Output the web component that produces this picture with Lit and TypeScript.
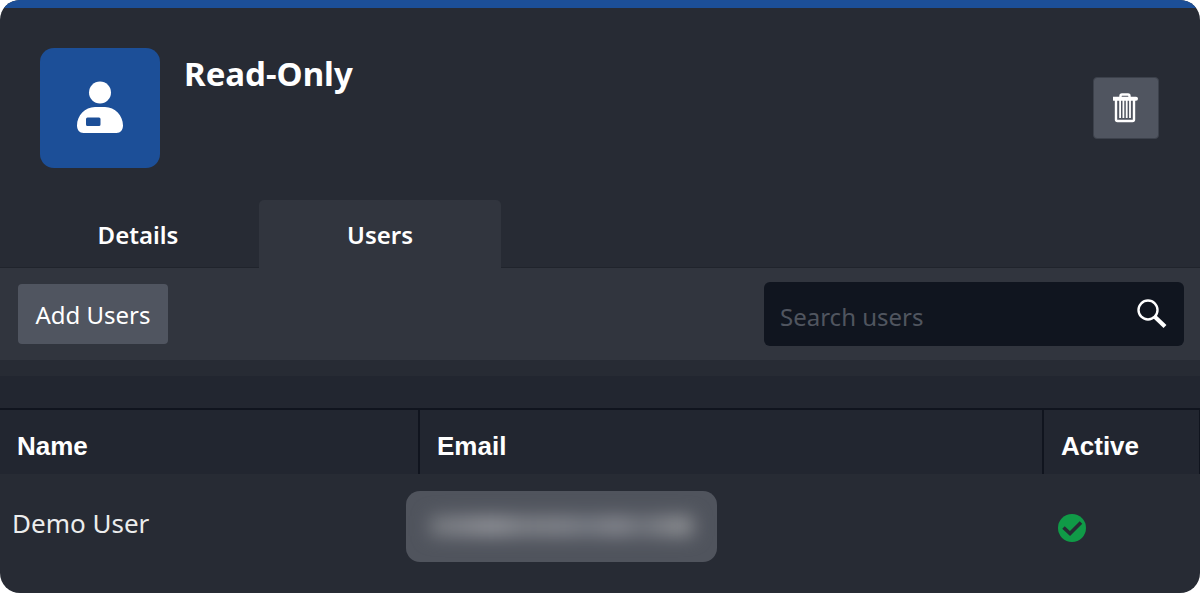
import { LitElement, html, css } from "lit";
import { customElement, state } from "lit/decorators.js";

interface User {
  name: string;
  active: boolean;
}

@customElement("app-root")
export class AppRoot extends LitElement {
  @state() private tab = "Users";
  @state() private users: User[] = [{ name: "Demo User", active: true }];

  static styles = css`
    :host {
      display: block;
      font-family: "Noto Sans", "Open Sans", sans-serif;
      font-size: 24px;
      color: #fff;
      background: #fff;
    }
    * {
      box-sizing: border-box;
    }
    button,
    input {
      font: inherit;
      color: inherit;
      border: 0;
      margin: 0;
    }
    .panel {
      min-height: 100vh;
      border-radius: 20px;
      overflow: hidden;
      background: #272b34;
      display: flex;
      flex-direction: column;
    }
    .accent {
      height: 8px;
      background: #1c4f98;
    }
    header {
      display: flex;
      gap: 24px;
      padding: 40px 41px 32px 40px;
    }
    .avatar {
      display: flex;
      width: 120px;
      height: 120px;
      border-radius: 14px;
      background: #1c4f98;
    }
    h1 {
      flex: 1;
      margin: 0;
      padding-top: 4px;
      font-size: 33px;
      line-height: 44px;
      font-weight: 700;
    }
    .delete {
      align-self: center;
      display: flex;
      align-items: center;
      justify-content: center;
      width: 66px;
      height: 62px;
      padding: 0;
      border: 1px solid #3c414b;
      border-radius: 4px;
      background: #505560;
    }
    .tabs {
      display: flex;
      padding-left: 17px;
      box-shadow: inset 0 -1px #20242c;
    }
    .tab {
      width: 242px;
      height: 68px;
      padding: 0;
      border-radius: 5px 5px 0 0;
      background: transparent;
      font-weight: 600;
    }
    .tab.selected {
      background: #31353e;
    }
    .toolbar {
      display: flex;
      align-items: center;
      justify-content: space-between;
      padding: 14px 16px 14px 18px;
      background: #31353e;
    }
    .add {
      min-width: 150px;
      height: 60px;
      padding: 0 16px;
      border-radius: 4px;
      background: #505560;
    }
    .search {
      display: flex;
      align-items: center;
      flex: 0 1 420px;
      height: 64px;
      padding: 0 16px;
      border-radius: 6px;
      background: #10151f;
    }
    .search input {
      flex: 1;
      min-width: 0;
      padding: 4px 0 0;
      background: transparent;
      outline: none;
    }
    .search input::placeholder {
      color: #50555f;
      opacity: 1;
    }
    .strip {
      height: 32px;
      margin-top: 16px;
      background: #222630;
    }
    table {
      width: 100%;
      table-layout: fixed;
      border-collapse: separate;
      border-spacing: 0;
      border-top: 2px solid #10141e;
    }
    .name {
      width: 35%;
    }
    .email {
      width: 52%;
    }
    th {
      height: 64px;
      padding: 8px 16px 0 17px;
      text-align: left;
      font-family: "Liberation Sans", Arial, sans-serif;
      font-size: 26px;
      font-weight: 700;
      background: #222630;
      border-right: 2px solid #10141e;
    }
    th:last-child {
      border-right-width: 1px;
    }
    td {
      height: 104px;
      padding: 0 14px 0 12px;
      color: #eceded;
    }
    td.user {
      padding-bottom: 6px;
      font-size: 26px;
    }
    .redacted {
      display: flex;
      align-items: center;
      width: 311px;
      height: 71px;
      margin-left: -26px;
      padding: 0 24px;
      border-radius: 14px;
      background: #50545d;
    }
    .smudge {
      flex: 1;
      height: 20px;
      filter: blur(9px);
      background: linear-gradient(
        90deg,
        #777a80,
        #92949a 24%,
        #7f8288 36%,
        #83868d 50%,
        #787c84 60%,
        #888a91 72%,
        #71757d 80%,
        #8e9094 94%
      );
    }
    svg {
      display: block;
    }
    .status {
      margin: 4px 0 0 2px;
    }
  `;

  render() {
    return html`
      <main class="panel">
        <div class="accent"></div>
        <header>
          <div class="avatar">
            <svg width="120" height="120" viewBox="0 0 120 120" aria-hidden="true">
              <circle cx="60" cy="44.500" r="11" fill="#fff" />
              <path
                fill="#fff"
                fill-rule="evenodd"
                d="M55 59h10c10 0 18 8.500 18 18.500 0 4.500-2.500 7.500-6.500 7.500h-33c-4 0-6.500-3-6.500-7.500C37 67.500 45 59 55 59Zm-7.500 10.500a1.500 1.500 0 0 0-1.500 1.500v5.500a1.500 1.500 0 0 0 1.500 1.500h11.500a1.500 1.500 0 0 0 1.500-1.500v-5.500a1.500 1.500 0 0 0-1.500-1.500Z"
              />
            </svg>
          </div>
          <h1>Read-Only</h1>
          <button class="delete" aria-label="Delete">
            <svg width="26" height="30" viewBox="0 0 26 30" fill="none" stroke="#fff">
              <path d="M7.500 4.500V3q0-1.500 1.500-1.500h6q1.500 0 1.500 1.500v1.500" stroke-width="2.400" />
              <path d="M1 5.700h22" stroke-width="4" stroke-linecap="round" />
              <path d="M3 7v19.500q0 1.500 1.500 1.500h15q1.500 0 1.500-1.500V7" stroke-width="2.400" />
              <path d="M7.100 7v18M10.400 7v18M13.700 7v18M17 7v18" stroke-width="1.800" />
            </svg>
          </button>
        </header>
        <nav class="tabs" role="tablist">
          ${["Details", "Users"].map(
            (t) => html`<button
              class="tab ${t === this.tab ? "selected" : ""}"
              role="tab"
              aria-selected=${t === this.tab}
              @click=${() => (this.tab = t)}
            >${t}</button>`
          )}
        </nav>
        <div class="toolbar">
          <button class="add">Add Users</button>
          <label class="search">
            <input type="text" placeholder="Search users" aria-label="Search users" />
            <svg width="32" height="32" viewBox="0 0 32 32" fill="none" stroke="#fff" aria-hidden="true">
              <circle cx="12" cy="12" r="9.500" stroke-width="2.400" />
              <path d="M18.500 18.500 29 28.500" stroke-width="4.200" />
            </svg>
          </label>
        </div>
        <div class="strip"></div>
        <table>
          <thead>
            <tr>
              <th class="name">Name</th>
              <th class="email">Email</th>
              <th>Active</th>
            </tr>
          </thead>
          <tbody>
            ${this.users.map(
              (u) => html`<tr>
                <td class="user">${u.name}</td>
                <td>
                  <div class="redacted"><span class="smudge"></span></div>
                </td>
                <td>
                  ${u.active
                    ? html`<svg class="status" width="28" height="28" viewBox="0 0 28 28" role="img" aria-label="Active">
                        <circle cx="14" cy="14" r="14" fill="#109a47" />
                        <path d="m5.500 13.500 6.500 6 11-11" fill="none" stroke="#272b34" stroke-width="3.600" />
                      </svg>`
                    : null}
                </td>
              </tr>`
            )}
          </tbody>
        </table>
      </main>
    `;
  }
}
